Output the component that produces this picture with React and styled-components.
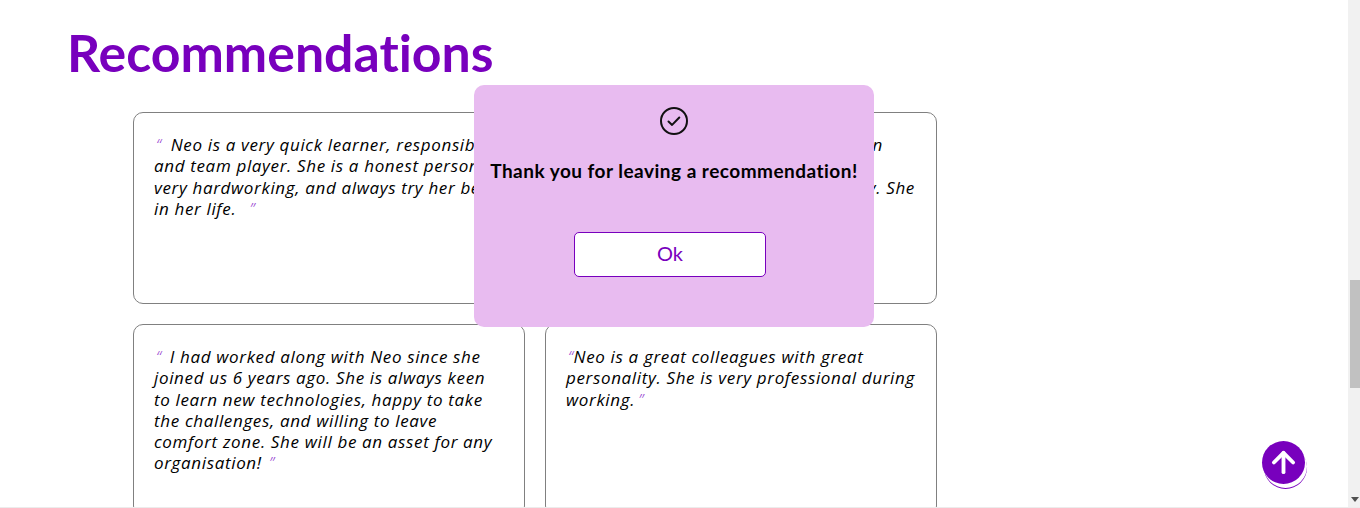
import styled, { createGlobalStyle } from 'styled-components';
import { ArrowUp } from 'lucide-react';

const purple = '#7800bd';
const bodyFont = '"Lato", "Open Sans", sans-serif';

const GlobalStyle = createGlobalStyle`
  html, body {
    margin: 0;
    height: 100%;
    overflow: hidden;
    background: #fff;
  }
`;

const Page = styled.div`
  position: relative;
  display: flex;
  flex-direction: column;
  width: 1360px;
  height: 508px;
  overflow: hidden;
  font-family: ${bodyFont};
  font-variant-ligatures: none;
`;

const Viewport = styled.div`
  display: flex;
  flex: 1;
  min-height: 0;
`;

const Main = styled.main`
  flex: 1;
  padding: 22px 0 0 67px;
  overflow: hidden;
`;

const Title = styled.h1`
  margin: 0 0 30px;
  font-size: 51.8px;
  line-height: 60px;
  font-weight: 700;
  color: ${purple};
`;

const Grid = styled.div`
  display: grid;
  grid-template-columns: 392px 392px;
  gap: 20px;
  margin-left: 66px;
`;

const Card = styled.div`
  box-sizing: border-box;
  height: 192px;
  padding: 21px 20px;
  border: 1px solid #808080;
  border-radius: 10px;
  background: #fff;
`;

const Quote = styled.p`
  margin: 0;
  font-family: "Open Sans", sans-serif;
  font-size: 17px;
  font-style: italic;
  letter-spacing: 0.65px;
  line-height: 21.3px;
  white-space: nowrap;
  color: #000;
`;

const Mark = styled.span`
  color: #9540d0;
  font-weight: 300;
  margin-left: ${props => props.$left || 2}px;
  margin-right: ${props => props.$right || 0}px;
`;

const Scrollbar = styled.div`
  position: relative;
  flex: none;
  width: 12px;
  background: #f1f1f1;
`;

const Thumb = styled.div`
  position: absolute;
  top: 280px;
  left: 2px;
  right: 0;
  height: 108px;
  background: #c1c1c1;
`;

const ArrowDown = styled.div`
  position: absolute;
  bottom: 5px;
  left: 3px;
  border-left: 4px solid transparent;
  border-right: 4px solid transparent;
  border-top: 5px solid #505050;
`;

const BottomEdge = styled.div`
  flex: none;
  height: 1px;
  background: #ececec;
`;

const Dialog = styled.div`
  position: absolute;
  top: 85px;
  left: 474px;
  display: flex;
  flex-direction: column;
  align-items: center;
  box-sizing: border-box;
  width: 400px;
  height: 242px;
  padding-top: 21px;
  border-radius: 10px;
  background: #e8bbf0;
`;

const DialogText = styled.p`
  margin: 21px 0 47px;
  font-size: 19px;
  letter-spacing: 0.48px;
  line-height: 28px;
  font-weight: 700;
  color: #000;
  white-space: nowrap;
`;

const OkButton = styled.button`
  box-sizing: border-box;
  width: 192px;
  height: 45px;
  margin-right: 8px;
  padding: 0 0 3px;
  border: 1px solid ${purple};
  border-radius: 5px;
  background: #fff;
  color: ${purple};
  font-family: ${bodyFont};
  font-size: 20px;
`;

const UpButton = styled.button`
  position: absolute;
  top: 441px;
  left: 1262px;
  display: flex;
  align-items: center;
  justify-content: center;
  width: 43px;
  height: 43px;
  padding: 0;
  border: none;
  border-radius: 50%;
  background: ${purple};
  color: #fff;
  box-shadow: 2px 4px 0 #fff, 2px 5px 0 ${purple};
`;

const CheckIcon = () => (
  <svg width="30" height="30" viewBox="0 0 30 30" fill="none" stroke="#111" strokeWidth="2" strokeLinecap="round" strokeLinejoin="round">
    <circle cx="15" cy="15" r="13" />
    <path d="M9.5 15.5l3.6 3.4 7.2-7.4" />
  </svg>
);

export default function App() {
  return (
    <>
      <GlobalStyle />
      <Page>
        <Viewport>
          <Main>
            <Title>Recommendations</Title>
            <Grid>
              <Card>
                <Quote>
                  <Mark $right={4}>“</Mark> Neo is a very quick learner, responsible<br />
                  and team player. She is a honest person,<br />
                  very hardworking, and always try her best<br />
                  in her life. <Mark $left={8}>”</Mark>
                </Quote>
              </Card>
              <Card>
                <Quote>
                  <Mark $right={4}>“</Mark> Neo is a so dedicated team person in<br />
                  every team and shares all that she<br />
                  knows and guides her colleagues daily. She<br />
                  is a pleasure to work with. <Mark>”</Mark>
                </Quote>
              </Card>
              <Card>
                <Quote>
                  <Mark $right={3}>“</Mark> I had worked along with Neo since she<br />
                  joined us 6 years ago. She is always keen<br />
                  to learn new technologies, happy to take<br />
                  the challenges, and willing to leave<br />
                  comfort zone. She will be an asset for any<br />
                  organisation! <Mark>”</Mark>
                </Quote>
              </Card>
              <Card>
                <Quote>
                  <Mark>“</Mark>Neo is a great colleagues with great<br />
                  personality. She is very professional during<br />
                  working.<Mark $left={3}>”</Mark>
                </Quote>
              </Card>
            </Grid>
          </Main>
          <Scrollbar>
            <Thumb />
            <ArrowDown />
          </Scrollbar>
        </Viewport>
        <BottomEdge />
        <Dialog>
          <CheckIcon />
          <DialogText>Thank you for leaving a recommendation!</DialogText>
          <OkButton>Ok</OkButton>
        </Dialog>
        <UpButton>
          <ArrowUp size={33} strokeWidth={2.8} />
        </UpButton>
      </Page>
    </>
  );
}
